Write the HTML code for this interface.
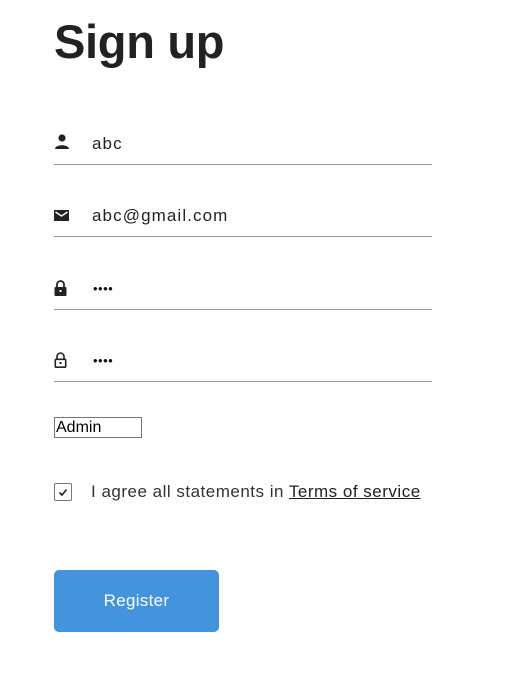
<!DOCTYPE html>
<html><head><style>
body{margin:0;background:#fff;width:521px;height:688px;position:relative;font-family:"Liberation Sans",sans-serif;color:#222;overflow:hidden}
.a{position:absolute}
h1{position:absolute;left:54px;top:14px;margin:0;font-size:47px;font-weight:bold;color:#222;letter-spacing:-0.3px}
.line{position:absolute;left:54px;width:378px;height:1px;background:#999}
.t{position:absolute;left:92px;font-size:17px;line-height:20px;color:#222;letter-spacing:1.1px}
.dots{position:absolute;left:93px;font-size:13px;letter-spacing:0.5px;line-height:20px;color:#111}
</style></head><body>
<h1>Sign up</h1>

<svg class="a" style="left:54px;top:134px" width="16" height="16" viewBox="0 0 16 16"><circle cx="8" cy="4" r="3.6" fill="#222"/><path d="M1 15 C1 10 15 10 15 15 Z" fill="#222"/></svg>
<div class="t" style="top:134px">abc</div>
<div class="line" style="top:164px"></div>

<svg class="a" style="left:54px;top:210px" width="15" height="12" viewBox="0 0 15 12"><rect x="0" y="0" width="15" height="11" fill="#222"/><path d="M1.5 2 L7.5 6 L13.5 2" stroke="#fff" stroke-width="1.5" fill="none"/></svg>
<div class="t" style="top:206px">abc@gmail.com</div>
<div class="line" style="top:236px"></div>

<svg class="a" style="left:54px;top:280px" width="13" height="16" viewBox="0 0 13 16"><path d="M3 7 V4.5 a3.5 3.5 0 0 1 7 0 V7" stroke="#222" stroke-width="1.8" fill="none"/><rect x="0.5" y="7" width="12" height="9" rx="1" fill="#222"/><rect x="5.5" y="10" width="2" height="2" fill="#fff"/></svg>
<div class="dots" style="top:279px">••••</div>
<div class="line" style="top:309px"></div>

<svg class="a" style="left:54px;top:352px" width="13" height="16" viewBox="0 0 13 16"><path d="M3 7 V4.5 a3.5 3.5 0 0 1 7 0 V7" stroke="#222" stroke-width="1.6" fill="none"/><rect x="1.3" y="7.3" width="10.4" height="7.9" rx="1" fill="none" stroke="#222" stroke-width="1.6"/><rect x="5.5" y="10" width="2" height="2" fill="#222"/></svg>
<div class="dots" style="top:351px">••••</div>
<div class="line" style="top:381px"></div>

<div class="a" style="left:54px;top:417px;width:85px;height:19px;border:1px solid #767676;font-size:16px;line-height:19px;color:#000;padding-left:1px;">Admin</div>

<div class="a" style="left:54px;top:483px;width:16px;height:16px;border:1px solid #767676;border-radius:2px;"></div>
<svg class="a" style="left:57px;top:486px" width="12" height="12" viewBox="0 0 12 12"><path d="M2.5 6.5 L5 9 L9.5 3.5" stroke="#222" stroke-width="1.6" fill="none"/></svg>
<div class="t" style="left:91px;top:482px;color:#333;letter-spacing:0.5px">I agree all statements in <span style="text-decoration:underline;color:#222">Terms of service</span></div>

<div class="a" style="left:54px;top:570px;width:165px;height:62px;background:#4393dd;border-radius:5px;color:#fff;font-size:17px;line-height:62px;text-align:center;letter-spacing:0.3px">Register</div>
</body></html>
